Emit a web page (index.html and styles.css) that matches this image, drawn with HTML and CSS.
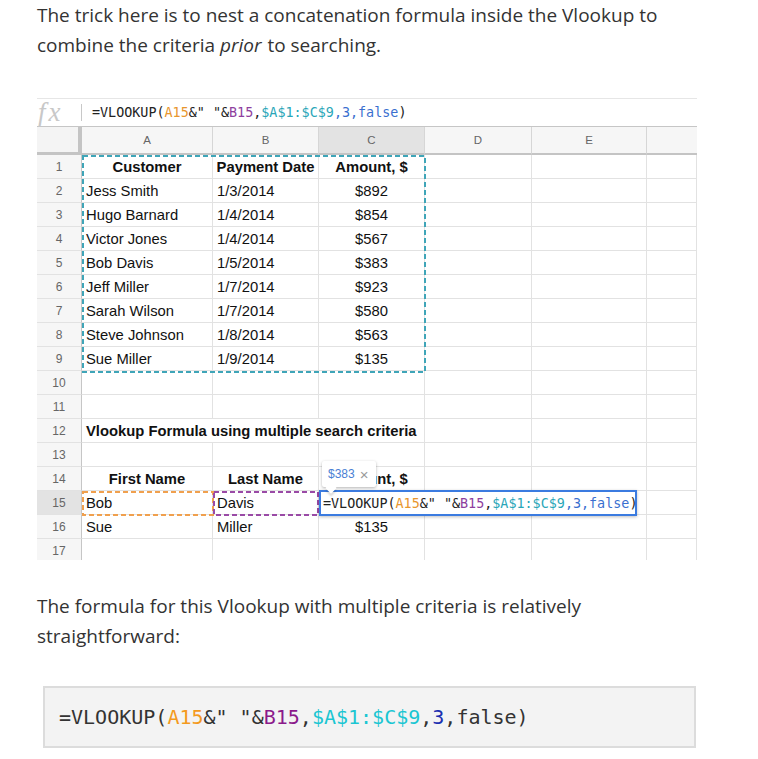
FILE: index.html
```html
<!DOCTYPE html>
<html>
<head>
<meta charset="utf-8">
<link rel="stylesheet" href="styles.css">
</head>
<body>
<div class="page">
  <p class="text">The trick here is to nest a concatenation formula inside the Vlookup to combine the criteria <em>prior</em> to searching.</p>

  <div class="sheet">
    <div class="fbar">
      <span class="fx">fx</span>
      <span class="sep"></span>
      <span class="formula">=VLOOKUP(<span class="f-or">A15</span>&amp;" "&amp;<span class="f-pu">B15</span>,<span class="f-te">$A$1:$C$9</span><span class="f-bl">,3,false</span>)</span>
    </div>
    <div class="grid">
      <div class="corner"></div>
      <div class="ch">A</div><div class="ch">B</div><div class="ch ch-act">C</div><div class="ch">D</div><div class="ch">E</div><div class="ch ch-last"></div>

      <div class="rh">1</div><div class="c b ctr">Customer</div><div class="c b ctr">Payment Date</div><div class="c b ctr">Amount, $</div><div class="c"></div><div class="c"></div><div class="c"></div>
      <div class="rh">2</div><div class="c">Jess Smith</div><div class="c">1/3/2014</div><div class="c ctr">$892</div><div class="c"></div><div class="c"></div><div class="c"></div>
      <div class="rh">3</div><div class="c">Hugo Barnard</div><div class="c">1/4/2014</div><div class="c ctr">$854</div><div class="c"></div><div class="c"></div><div class="c"></div>
      <div class="rh">4</div><div class="c">Victor Jones</div><div class="c">1/4/2014</div><div class="c ctr">$567</div><div class="c"></div><div class="c"></div><div class="c"></div>
      <div class="rh">5</div><div class="c">Bob Davis</div><div class="c">1/5/2014</div><div class="c ctr">$383</div><div class="c"></div><div class="c"></div><div class="c"></div>
      <div class="rh">6</div><div class="c">Jeff Miller</div><div class="c">1/7/2014</div><div class="c ctr">$923</div><div class="c"></div><div class="c"></div><div class="c"></div>
      <div class="rh">7</div><div class="c">Sarah Wilson</div><div class="c">1/7/2014</div><div class="c ctr">$580</div><div class="c"></div><div class="c"></div><div class="c"></div>
      <div class="rh">8</div><div class="c">Steve Johnson</div><div class="c">1/8/2014</div><div class="c ctr">$563</div><div class="c"></div><div class="c"></div><div class="c"></div>
      <div class="rh">9</div><div class="c">Sue Miller</div><div class="c">1/9/2014</div><div class="c ctr">$135</div><div class="c"></div><div class="c"></div><div class="c"></div>
      <div class="rh">10</div><div class="c"></div><div class="c"></div><div class="c"></div><div class="c"></div><div class="c"></div><div class="c"></div>
      <div class="rh">11</div><div class="c"></div><div class="c"></div><div class="c"></div><div class="c"></div><div class="c"></div><div class="c"></div>
      <div class="rh">12</div><div class="c b span3">Vlookup Formula using multiple search criteria</div><div class="c"></div><div class="c"></div><div class="c"></div>
      <div class="rh">13</div><div class="c"></div><div class="c"></div><div class="c"></div><div class="c"></div><div class="c"></div><div class="c"></div>
      <div class="rh">14</div><div class="c b ctr">First Name</div><div class="c b ctr">Last Name</div><div class="c b ctr">Amount, $</div><div class="c"></div><div class="c"></div><div class="c"></div>
      <div class="rh rh-act">15</div><div class="c">Bob</div><div class="c">Davis</div><div class="c"></div><div class="c"></div><div class="c"></div><div class="c"></div>
      <div class="rh">16</div><div class="c">Sue</div><div class="c">Miller</div><div class="c ctr">$135</div><div class="c"></div><div class="c"></div><div class="c"></div>
      <div class="rh">17</div><div class="c"></div><div class="c"></div><div class="c"></div><div class="c"></div><div class="c"></div><div class="c"></div>

      <svg class="marks" width="660" height="436" viewBox="0 0 660 436">
        <rect x="46" y="29" width="342" height="216" fill="none" stroke="#3fa5b8" stroke-width="2" stroke-dasharray="5 3"/>
        <rect x="46" y="365" width="130" height="23" fill="none" stroke="#f0a04e" stroke-width="2" stroke-dasharray="5 3"/>
        <rect x="177" y="365" width="104" height="23" fill="none" stroke="#9a4aa6" stroke-width="2" stroke-dasharray="5 3"/>
      </svg>

      <div class="edit">=VLOOKUP(<span class="f-or">A15</span>&amp;" "&amp;<span class="f-pu">B15</span>,<span class="f-te">$A$1:$C$9</span><span class="f-bl">,3,false</span>)<span class="caret"></span></div>

      <div class="tip"><span class="tip-val">$383</span><span class="tip-x">×</span></div>
    </div>
  </div>

  <p class="text text2">The formula for this Vlookup with multiple criteria is relatively straightforward:</p>

  <pre class="code">=VLOOKUP(<span class="k-or">A15</span>&amp;" "&amp;<span class="k-pu">B15</span>,<span class="k-cy">$A$1:$C$9</span>,<span class="k-bl">3</span>,false)</pre>
</div>
</body>
</html>
```

FILE: styles.css
```css
html, body {
  margin: 0;
  padding: 0;
  background: #fff;
}

.page {
  padding-left: 37px;
  width: 660px;
}

.text {
  margin: 0;
  font-family: "Open Sans", sans-serif;
  font-size: 19px;
  line-height: 30px;
  color: #333;
}

.text em {
  padding-right: 1px;
}

.text2 {
  margin-top: 31px;
}

/* ---------- spreadsheet ---------- */
.sheet {
  margin-top: 38px;
  width: 660px;
  height: 462px;
  overflow: hidden;
  background: #fff;
}

.fbar {
  height: 27px;
  border-top: 1px solid #e6e6e6;
  border-bottom: 1px solid #c6c6c6;
  display: flex;
  align-items: center;
}

.fx {
  width: 44px;
  padding-left: 1px;
  box-sizing: border-box;
  font-family: "Liberation Serif", serif;
  font-style: italic;
  font-size: 27px;
  letter-spacing: 3px;
  color: #c8c8c8;
  line-height: 27px;
}

.sep {
  width: 1px;
  height: 17px;
  background: #c8c8c8;
  margin-right: 10px;
}

.formula, .edit {
  font-family: "DejaVu Sans Mono", monospace;
  font-size: 13.4px;
  color: #222;
  white-space: pre;
}

.f-or { color: #e8962e; }
.f-pu { color: #8e3f9e; }
.f-te { color: #2aa6b8; }
.f-bl { color: #3a6fcf; }

.grid {
  position: relative;
  display: grid;
  grid-template-columns: 45px 131px 106px 106px 107px 115px 50px;
  grid-template-rows: 28px repeat(17, 24px);
  font-family: "Liberation Sans", Arial, sans-serif;
  font-size: 14.8px;
  color: #111;
}

.corner {
  background: #f4f4f4;
  border-right: 4px solid #c4c4c4;
  border-bottom: 3px solid #c4c4c4;
  box-sizing: border-box;
}

.ch {
  background: #f6f6f6;
  border-right: 1px solid #d6d6d6;
  border-bottom: 2px solid #c4c4c4;
  box-sizing: border-box;
  display: flex;
  align-items: center;
  justify-content: center;
  font-size: 11.5px;
  color: #666;
}

.ch-act { background: #e3e3e3; }
.ch-last { border-right: none; }

.rh {
  background: #f6f6f6;
  border-right: 1px solid #c6c6c6;
  border-bottom: 1px solid #e2e2e2;
  box-sizing: border-box;
  display: flex;
  align-items: center;
  justify-content: center;
  font-size: 12px;
  color: #666;
}

.rh-act { background: #e3e3e3; }

.c {
  border-right: 1px solid #e2e2e2;
  border-bottom: 1px solid #e2e2e2;
  box-sizing: border-box;
  display: flex;
  align-items: center;
  padding: 0 4px;
  white-space: nowrap;
  overflow: visible;
}

.c.b { font-weight: bold; }
.c.ctr { justify-content: center; }
.span3 { grid-column: span 3; }

.marks {
  position: absolute;
  left: 0;
  top: 0;
  pointer-events: none;
}

.edit {
  position: absolute;
  left: 282px;
  top: 363px;
  width: 318px;
  height: 26px;
  box-sizing: border-box;
  border: 2px solid #3b7be0;
  background: #fff;
  box-shadow: 0 1px 3px rgba(0,0,0,0.25);
  padding-left: 2px;
  display: flex;
  align-items: center;
}

.caret {
  display: inline-block;
  width: 1px;
  height: 16px;
  background: #000;
}

.tip {
  position: absolute;
  left: 285px;
  top: 334px;
  width: 54px;
  height: 26px;
  box-sizing: border-box;
  background: #fff;
  border-radius: 2px;
  box-shadow: 0 1px 3px rgba(0,0,0,0.3);
  display: flex;
  align-items: center;
  padding-left: 6px;
  gap: 5px;
  font-size: 12px;
}

.tip::after {
  content: "";
  position: absolute;
  left: 5px;
  bottom: -5px;
  width: 8px;
  height: 8px;
  background: #fff;
  transform: rotate(45deg);
  box-shadow: 2px 2px 2px rgba(0,0,0,0.15);
}

.tip-val { color: #4a7fd4; }
.tip-x { color: #9a9a9a; font-size: 15px; }

/* ---------- code block ---------- */
.code {
  margin: 35px 0 0 6px;
  width: 653px;
  height: 62px;
  box-sizing: border-box;
  background: #f3f3f3;
  border: 2px solid #dcdcdc;
  padding: 0 14px;
  display: flex;
  align-items: center;
  font-family: "DejaVu Sans Mono", monospace;
  font-size: 20px;
  color: #333;
}

.k-or { color: #f39a1e; }
.k-pu { color: #8b1a8b; }
.k-cy { color: #1bc6d2; }
.k-bl { color: #1a2eb0; }
```
